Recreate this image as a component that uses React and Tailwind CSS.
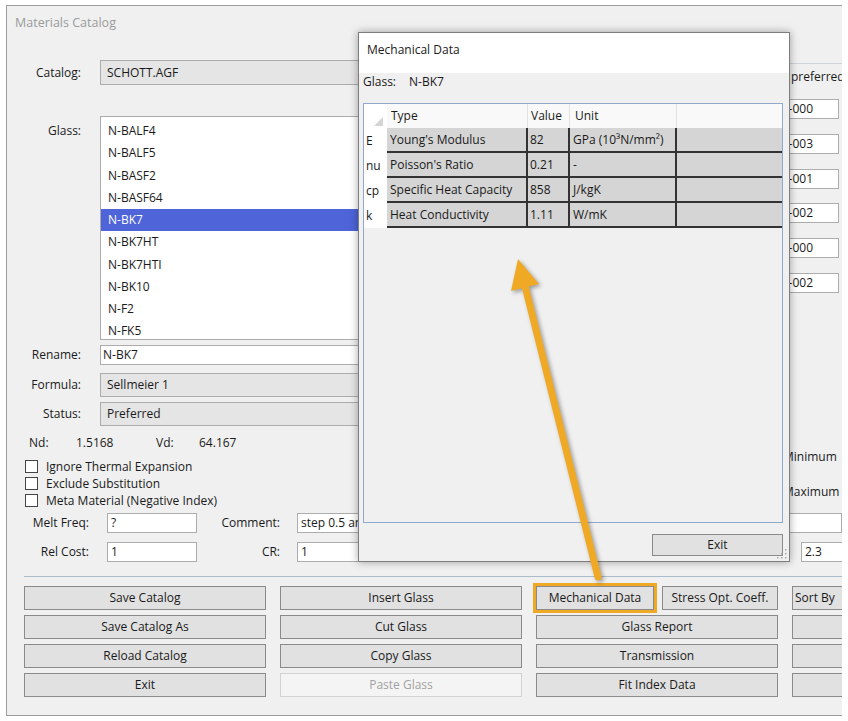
import React from 'react';

const glasses = [
  'N-BALF4',
  'N-BALF5',
  'N-BASF2',
  'N-BASF64',
  'N-BK7',
  'N-BK7HT',
  'N-BK7HTI',
  'N-BK10',
  'N-F2',
  'N-FK5',
];

const coeffs = [
  '1.03961212E-000',
  '6.00069867E-003',
  '2.31792344E-001',
  '2.00179144E-002',
  '1.01046945E-000',
  '1.03560653E-002',
];

const mechRows = [
  { key: 'E', type: "Young's Modulus", value: '82', unit: 'GPa (10³N/mm²)' },
  { key: 'nu', type: "Poisson's Ratio", value: '0.21', unit: '-' },
  { key: 'cp', type: 'Specific Heat Capacity', value: '858', unit: 'J/kgK' },
  { key: 'k', type: 'Heat Conductivity', value: '1.11', unit: 'W/mK' },
];

const Btn = ({ children, disabled, className = '' }) => (
  <div
    className={`h-[24px] flex items-center justify-center border whitespace-nowrap overflow-hidden ${
      disabled
        ? 'bg-[#f4f4f4] border-[#d2d2d2] text-[#a2a2a2]'
        : 'bg-[#e1e1e1] border-[#8a8a8a] text-[#1a1a1a]'
    } ${className}`}
  >
    {children}
  </div>
);

const Check = ({ label }) => (
  <div className="h-[17px] flex items-center pl-[18px]">
    <div className="w-[13px] h-[13px] bg-white border border-[#444]" />
    <span className="ml-[8px]">{label}</span>
  </div>
);

const MechanicalDialog = () => (
  <div className="absolute left-[351px] top-[26px] w-[432px] h-[530px] bg-[#f0f0f0] border border-[#7d7d7d] shadow-[0_0_8px_rgba(0,0,0,0.35)] z-10">
    <div className="bg-white h-[40px] pt-[9px] pl-[8px]">Mechanical Data</div>
    <div className="flex pl-[4px] pt-[1px] h-[56px]">
      <span className="w-[46px]">Glass:</span>
      <span>N-BK7</span>
    </div>
    <div className="ml-[4px] w-[420px] h-[420px] border border-[#8ea9cd] bg-[#f0f0f0] -mt-[26px]">
      {/* header */}
      <div className="flex h-[24px] bg-[#f9f9f9]">
        <div className="w-[23px] relative bg-white">
          <svg className="absolute left-[10px] top-[13px]" width="9" height="9" viewBox="0 0 9 9">
            <polygon points="9,0 9,9 0,9" fill="#d4d4d4" />
          </svg>
        </div>
        <div className="w-[141px] pl-[4px] flex items-center border-r border-[#e2e2e2]">Type</div>
        <div className="w-[42px] pl-[3px] flex items-center border-r border-[#e2e2e2]">Value</div>
        <div className="w-[107px] pl-[5px] flex items-center border-r border-[#e2e2e2]">Unit</div>
        <div className="flex-1" />
      </div>
      {mechRows.map((r) => (
        <div key={r.key} className="flex h-[25px]">
          <div className="w-[23px] bg-white flex items-center pl-[2px]">{r.key}</div>
          <div className="flex-1 flex bg-[#d5d5d5] border-b-2 border-[#333]">
            <div className="w-[141px] pl-[3px] flex items-center border-r-2 border-[#333] whitespace-nowrap">
              {r.type}
            </div>
            <div className="w-[42px] pl-[2px] flex items-center border-r-2 border-[#333]">{r.value}</div>
            <div className="w-[107px] pl-[3px] flex items-center border-r-2 border-[#333] whitespace-nowrap">
              {r.unit}
            </div>
            <div className="flex-1" />
          </div>
        </div>
      ))}
    </div>
    <div className="flex mt-[11px]">
      <Btn className="ml-[293px] w-[131px] !h-[22px]">Exit</Btn>
    </div>
    <svg className="absolute right-[2px] bottom-[2px]" width="11" height="11" viewBox="0 0 11 11">
      {[
        [9, 1],
        [9, 5],
        [5, 5],
        [9, 9],
        [5, 9],
        [1, 9],
      ].map(([x, y]) => (
        <rect key={`${x}-${y}`} x={x} y={y} width="1.5" height="1.5" fill="#a8a8a8" />
      ))}
    </svg>
  </div>
);

export default function App() {
  return (
    <div className="relative w-[848px] h-[721px] bg-white pt-[5px] pl-[6px] font-['Open_Sans',sans-serif] text-[12px] leading-[16px] text-[#1a1a1a]">
      <div className="relative w-[836px] h-[711px] bg-[#f0f0f0] border-t border-l border-b border-[#9c9c9c] overflow-hidden">
        <div className="pt-[9px] pl-[8px] text-[#9b9b9b] text-[12.5px]">Materials Catalog</div>

        {/* upper section */}
        <div className="flex mt-[29px]">
          <div className="w-[683px] shrink-0">
            <div className="flex items-center h-[25px]">
              <span className="w-[74px] shrink-0 text-right">Catalog:</span>
              <div className="ml-[19px] w-[590px] shrink-0 h-full bg-[#e5e5e5] border border-[#acacac] flex items-center pl-[6px]">
                SCHOTT.AGF
              </div>
            </div>
            <div className="flex mt-[31px]">
              <span className="w-[74px] shrink-0 text-right pt-[7px]">Glass:</span>
              <div className="ml-[19px] w-[590px] shrink-0 h-[224px] bg-white border border-[#acacac] pt-[3px] overflow-hidden">
                {glasses.map((g) => (
                  <div
                    key={g}
                    className={`h-[22.25px] flex items-center pl-[7px] ${
                      g === 'N-BK7' ? 'bg-[#4e64d8] text-white' : ''
                    }`}
                  >
                    {g}
                  </div>
                ))}
              </div>
            </div>
            <div className="flex items-center h-[20px] mt-[5px]">
              <span className="w-[74px] shrink-0 text-right">Rename:</span>
              <div className="ml-[19px] w-[590px] shrink-0 h-full bg-white border border-[#acacac] flex items-center pl-[2px]">
                N-BK7
              </div>
            </div>
            <div className="flex items-center h-[24px] mt-[8px]">
              <span className="w-[74px] shrink-0 text-right">Formula:</span>
              <div className="ml-[19px] w-[590px] shrink-0 h-full bg-[#e5e5e5] border border-[#acacac] flex items-center pl-[6px]">
                Sellmeier 1
              </div>
            </div>
            <div className="flex items-center h-[24px] mt-[5px]">
              <span className="w-[74px] shrink-0 text-right">Status:</span>
              <div className="ml-[19px] w-[590px] shrink-0 h-full bg-[#e5e5e5] border border-[#acacac] flex items-center pl-[6px]">
                Preferred
              </div>
            </div>
          </div>
          <div className="flex-1">
            <div className="mt-[3px] border-t border-[#cdd3d8]" />
            <div className="mt-[5px] pl-[101px] whitespace-nowrap">preferred</div>
            {coeffs.map((c, i) => (
              <div
                key={c}
                className={`ml-[10px] w-[139px] h-[20px] bg-white border border-[#acacac] flex items-center justify-end pr-[25px] ${
                  i === 0 || i === 3 ? 'mt-[14px]' : 'mt-[15px]'
                }`}
              >
                {c}
              </div>
            ))}
          </div>
        </div>

        {/* lower section */}
        <div className="flex">
          <div className="w-[683px] shrink-0">
            <div className="flex mt-[9px] pl-[22px]">
              <span className="w-[47px]">Nd:</span>
              <span className="w-[80px]">1.5168</span>
              <span className="w-[43px]">Vd:</span>
              <span>64.167</span>
            </div>
            <div className="mt-[7px]">
              <Check label="Ignore Thermal Expansion" />
              <Check label="Exclude Substitution" />
              <Check label="Meta Material (Negative Index)" />
            </div>
          </div>
          <div className="flex-1 pl-[93px]">
            <div className="mt-[23px]">Minimum</div>
            <div className="mt-[19px]">Maximum</div>
          </div>
        </div>

        <div className="flex items-center h-[20px] mt-[4px]">
          <span className="w-[82px] shrink-0 text-right">Melt Freq:</span>
          <div className="ml-[18px] w-[90px] shrink-0 h-full bg-white border border-[#acacac] flex items-center pl-[3px]">?</div>
          <span className="w-[83px] shrink-0 text-right">Comment:</span>
          <div className="ml-[17px] flex-1 h-full bg-white border border-[#acacac] flex items-center pl-[3px] whitespace-nowrap">
            step 0.5 and 1.0 nm
          </div>
        </div>
        <div className="flex items-center h-[20px] mt-[9px]">
          <span className="w-[82px] shrink-0 text-right">Rel Cost:</span>
          <div className="ml-[18px] w-[90px] shrink-0 h-full bg-white border border-[#acacac] flex items-center pl-[3px]">1</div>
          <span className="w-[83px] shrink-0 text-right">CR:</span>
          <div className="ml-[17px] w-[403px] shrink-0 h-full bg-white border border-[#acacac] flex items-center pl-[3px]">1</div>
          <div className="ml-[101px] w-[60px] shrink-0 h-full bg-white border border-[#acacac] flex items-center pl-[3px]">2.3</div>
        </div>

        <div className="mt-[14px] ml-[17px] border-t border-[#a9bccb]" />

        <div className="mt-[9px] ml-[17px] grid grid-cols-[242px_242px_242px_242px] gap-x-[14px] gap-y-[5px]">
          <Btn>Save Catalog</Btn>
          <Btn>Insert Glass</Btn>
          <div className="flex gap-[8px]">
            <Btn className="w-[118px] outline-[3px] outline-solid outline-[#efa925]">Mechanical Data</Btn>
            <Btn className="flex-1">Stress Opt. Coeff.</Btn>
          </div>
          <Btn className="!justify-start pl-[2px]">Sort By</Btn>

          <Btn>Save Catalog As</Btn>
          <Btn>Cut Glass</Btn>
          <Btn>Glass Report</Btn>
          <Btn />

          <Btn>Reload Catalog</Btn>
          <Btn>Copy Glass</Btn>
          <Btn>Transmission</Btn>
          <Btn />

          <Btn>Exit</Btn>
          <Btn disabled>Paste Glass</Btn>
          <Btn>Fit Index Data</Btn>
          <Btn />
        </div>

        <MechanicalDialog />
      </div>

      {/* annotation arrow */}
      <svg
        className="absolute left-0 top-0 pointer-events-none z-20 drop-shadow-[2px_2px_2px_rgba(0,0,0,0.35)]"
        width="848"
        height="721"
        viewBox="0 0 848 721"
      >
        <line x1="598" y1="577" x2="525" y2="286" stroke="#efa925" strokeWidth="7" strokeLinecap="round" />
        <polygon points="518,259 511,291 539,284" fill="#efa925" />
      </svg>
    </div>
  );
}
